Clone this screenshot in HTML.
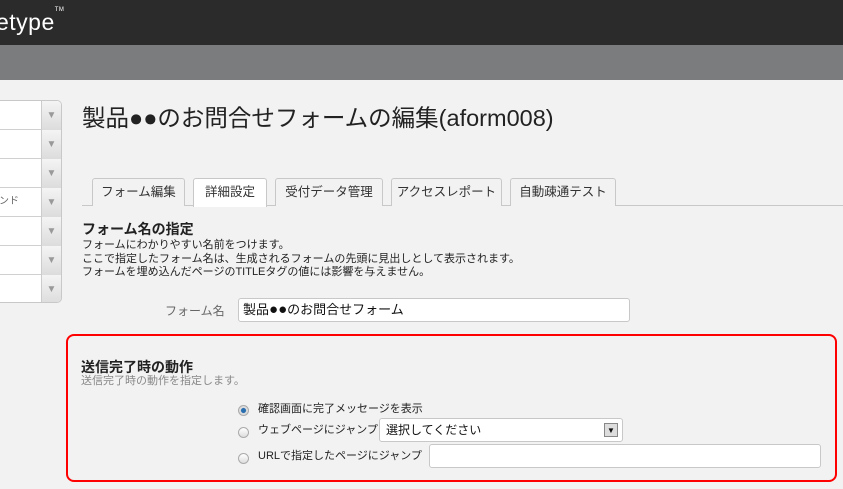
<!DOCTYPE html>
<html><head><meta charset="utf-8"><style>
*{margin:0;padding:0;box-sizing:border-box}
body{width:843px;height:489px;overflow:hidden;background:#f2f2f2;font-family:"Liberation Sans","Noto Sans CJK JP",sans-serif;color:#222;position:relative}
.a{position:absolute}
.top{left:0;top:0;width:843px;height:45px;background:#2b2b2b}
.gray{left:0;top:45px;width:843px;height:35px;background:#7b7c7e}
.logo{left:-4px;top:9px;color:#fff;font-size:23px;letter-spacing:0.5px}
.side{left:-5px;top:100px;width:67px;height:203px;border:1px solid #c8c8c8;border-radius:5px;background:#fff;overflow:hidden}
.row{height:29px;border-bottom:1px solid #d0d0d0;position:relative;font-size:10px;color:#666;line-height:28px}
.row .ar{position:absolute;right:0;top:0;width:20px;height:29px;background:linear-gradient(#f4f4f4,#dcdcdc);border-left:1px solid #ccc;color:#999;font-size:10px;text-align:center;line-height:29px}
.title{left:82px;top:99px;font-size:23.5px;color:#222}
.tabline{left:82px;top:205px;width:761px;height:1px;background:#c8c8c8}
.tab{top:178px;height:28px;border:1px solid #c8c8c8;border-bottom:none;border-radius:3px 3px 0 0;background:#f2f2f2;font-size:12.5px;line-height:27px;text-align:center;color:#333}
.tab.on{background:#fff;height:29px}
.h{font-size:14px;font-weight:bold;color:#222}
.s{font-size:11px;line-height:13.5px;color:#222}
.inp{background:#fff;border:1px solid #c8c8c8;border-radius:3px}
.red{left:66px;top:334px;width:771px;height:148px;border:2.5px solid #f00;border-radius:8px}
.rad{width:11px;height:11px;border-radius:50%;border:1px solid #aaa;background:linear-gradient(#fff,#ddd)}
</style></head><body>
<div class="a top"></div><div class="a gray"></div>
<div class="a logo">etype<sup style="font-size:6px;vertical-align:top;position:relative;top:-2px">TM</sup></div>
<div class="a side">
<div class="row"><span class="ar">▼</span></div>
<div class="row"><span class="ar">▼</span></div>
<div class="row"><span class="ar">▼</span></div>
<div class="row"><span style="position:absolute;left:3px">ンド</span><span class="ar">▼</span></div>
<div class="row"><span class="ar">▼</span></div>
<div class="row"><span class="ar">▼</span></div>
<div class="row" style="border:none"><span class="ar">▼</span></div>
</div>
<div class="a title">製品●●のお問合せフォームの編集(aform008)</div>
<div class="a tabline"></div>
<div class="a tab" style="left:92px;width:93px">フォーム編集</div>
<div class="a tab on" style="left:193px;width:74px">詳細設定</div>
<div class="a tab" style="left:275px;width:108px">受付データ管理</div>
<div class="a tab" style="left:391px;width:111px">アクセスレポート</div>
<div class="a tab" style="left:510px;width:106px">自動疎通テスト</div>
<div class="a h" style="left:82px;top:219px">フォーム名の指定</div>
<div class="a s" style="left:82px;top:239px">フォームにわかりやすい名前をつけます。<br>ここで指定したフォーム名は、生成されるフォームの先頭に見出しとして表示されます。<br>フォームを埋め込んだページのTITLEタグの値には影響を与えません。</div>
<div class="a" style="left:165px;top:302px;font-size:12px;color:#666">フォーム名</div>
<div class="a inp" style="left:238px;top:298px;width:392px;height:24px;font-size:13px;line-height:22px;padding-left:4px;color:#111">製品<span style="font-size:15px">●●</span>のお問合せフォーム</div>
<div class="a red"></div>
<div class="a h" style="left:81px;top:357px">送信完了時の動作</div>
<div class="a s" style="left:81px;top:375px;color:#888">送信完了時の動作を指定します。</div>
<div class="a rad" style="left:238px;top:405px;background:radial-gradient(#2a6fb0 35%,#ddd 45%)"></div>
<div class="a s" style="left:258px;top:403px">確認画面に完了メッセージを表示</div>
<div class="a rad" style="left:238px;top:427px"></div>
<div class="a s" style="left:258px;top:424px">ウェブページにジャンプ</div>
<div class="a inp" style="left:379px;top:418px;width:244px;height:24px;font-size:12px;line-height:22px;padding-left:6px;color:#111">選択してください<span style="position:absolute;right:4px;top:4px;width:14px;height:14px;border:1px solid #888;background:#ddd;font-size:8px;line-height:13px;text-align:center">▼</span></div>
<div class="a rad" style="left:238px;top:453px"></div>
<div class="a s" style="left:258px;top:450px">URLで指定したページにジャンプ</div>
<div class="a inp" style="left:429px;top:444px;width:392px;height:24px"></div>
</body></html>
